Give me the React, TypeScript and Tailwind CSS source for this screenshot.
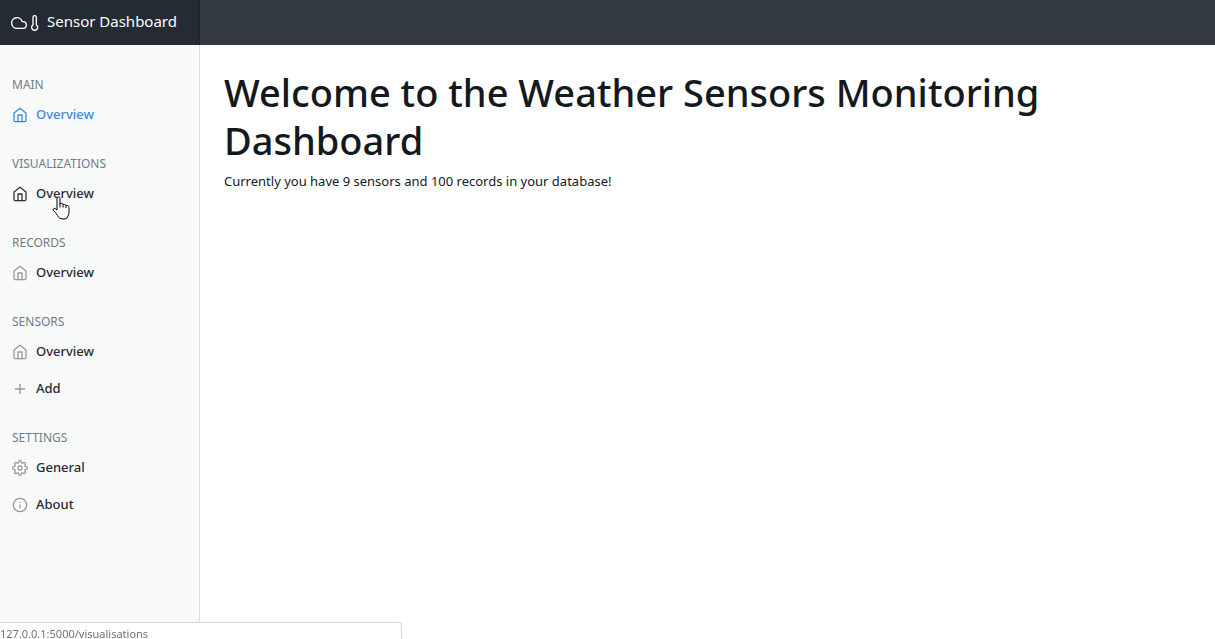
import { FiCloud, FiHome, FiInfo, FiPlus, FiSettings, FiThermometer } from "react-icons/fi";
import type { IconType } from "react-icons";

type Item = { label: string; icon: IconType; href: string; state?: "active" | "hover" };
type Section = { title: string; items: Item[] };

const sections: Section[] = [
  { title: "MAIN", items: [{ label: "Overview", icon: FiHome, href: "#main", state: "active" }] },
  { title: "VISUALIZATIONS", items: [{ label: "Overview", icon: FiHome, href: "#visualisations", state: "hover" }] },
  { title: "RECORDS", items: [{ label: "Overview", icon: FiHome, href: "#records" }] },
  {
    title: "SENSORS",
    items: [
      { label: "Overview", icon: FiHome, href: "#sensors" },
      { label: "Add", icon: FiPlus, href: "#add" },
    ],
  },
  {
    title: "SETTINGS",
    items: [
      { label: "General", icon: FiSettings, href: "#general" },
      { label: "About", icon: FiInfo, href: "#about" },
    ],
  },
];

function NavItem({ item }: { item: Item }) {
  const Icon = item.icon;
  const text = item.state === "active" ? "text-[#3d87e4]" : "text-[#292b2f]";
  const tint = item.state === "active" ? "text-[#3d87e4]" : item.state === "hover" ? "text-[#333333]" : "text-[#999999]";
  return (
    <li className="relative">
      <a href={item.href} className={`flex h-[37px] items-center gap-2 px-3 pt-0.5 text-[13px] font-medium ${text}`}>
        <Icon className={`size-4 ${tint}`} />
        {item.label}
      </a>
      {item.state === "hover" && <HandCursor />}
    </li>
  );
}

function HandCursor() {
  return (
    <svg aria-hidden="true" viewBox="0 0 18 24" className="pointer-events-none absolute top-[22px] left-[52px] z-10 h-6 w-[18px]">
      <path
        d="M6.5 1C7.5 1 8 1.700 8 2.500V8C8.300 6.900 11 7 11 8.600C11.700 7.800 13.500 8.200 13.800 9.600C14.800 9 17 9.600 17 11.500V16.500C17 18.500 16 19.500 15.500 21C15 22.400 13.500 23 11 23C8 23 6.500 21.500 5.500 19.500C4.500 17.500 2.500 15.500 1.200 14.200C.5 13.200 2 11.800 3.200 12.500L5 14V2.500C5 1.700 5.500 1 6.500 1Z"
        fill="white"
        stroke="black"
      />
      <path d="M8 7.500V11.500M11 8.500V11.500M14 9.500V12" stroke="black" fill="none" />
    </svg>
  );
}

export default function App() {
  return (
    <div className="flex min-h-screen flex-col bg-white font-['Segoe_UI','Noto_Sans',sans-serif] text-[#14191d]">
      <header className="flex h-[45px] bg-[#323942]">
        <a href="#home" className="flex w-[200px] items-center border-r border-[#1f262c] bg-[#242b32] pb-0.5 pl-[11px] text-[15px] text-white">
          <FiCloud className="mt-0.5 size-4" />
          <FiThermometer className="mt-0.5 size-4" />
          <span className="ml-1">Sensor Dashboard</span>
        </a>
      </header>
      <div className="flex flex-1">
        <nav className="w-[200px] shrink-0 border-r border-[#dcdddd] bg-[#f8faf9] pt-2">
          {sections.map((section) => (
            <section key={section.title} className="pt-[22px]">
              <h2 className="px-3 text-xs leading-5 text-[#727c84]">{section.title}</h2>
              <ul>
                {section.items.map((item) => (
                  <NavItem key={item.label} item={item} />
                ))}
              </ul>
            </section>
          ))}
        </nav>
        <main className="flex-1 px-6 pt-[23px]">
          <h1 className="mb-[7px] text-[38px] leading-12 font-medium">Welcome to the Weather Sensors Monitoring Dashboard</h1>
          <p className="text-[13px] leading-5">Currently you have 9 sensors and 100 records in your database!</p>
        </main>
      </div>
      <div className="fixed bottom-0 left-0 h-[17px] w-[402px] rounded-tr-sm border-t border-r border-[#d5d6d6] bg-white text-[11px] leading-[22px] text-[#70757a]">
        127.0.0.1:5000/visualisations
      </div>
    </div>
  );
}
